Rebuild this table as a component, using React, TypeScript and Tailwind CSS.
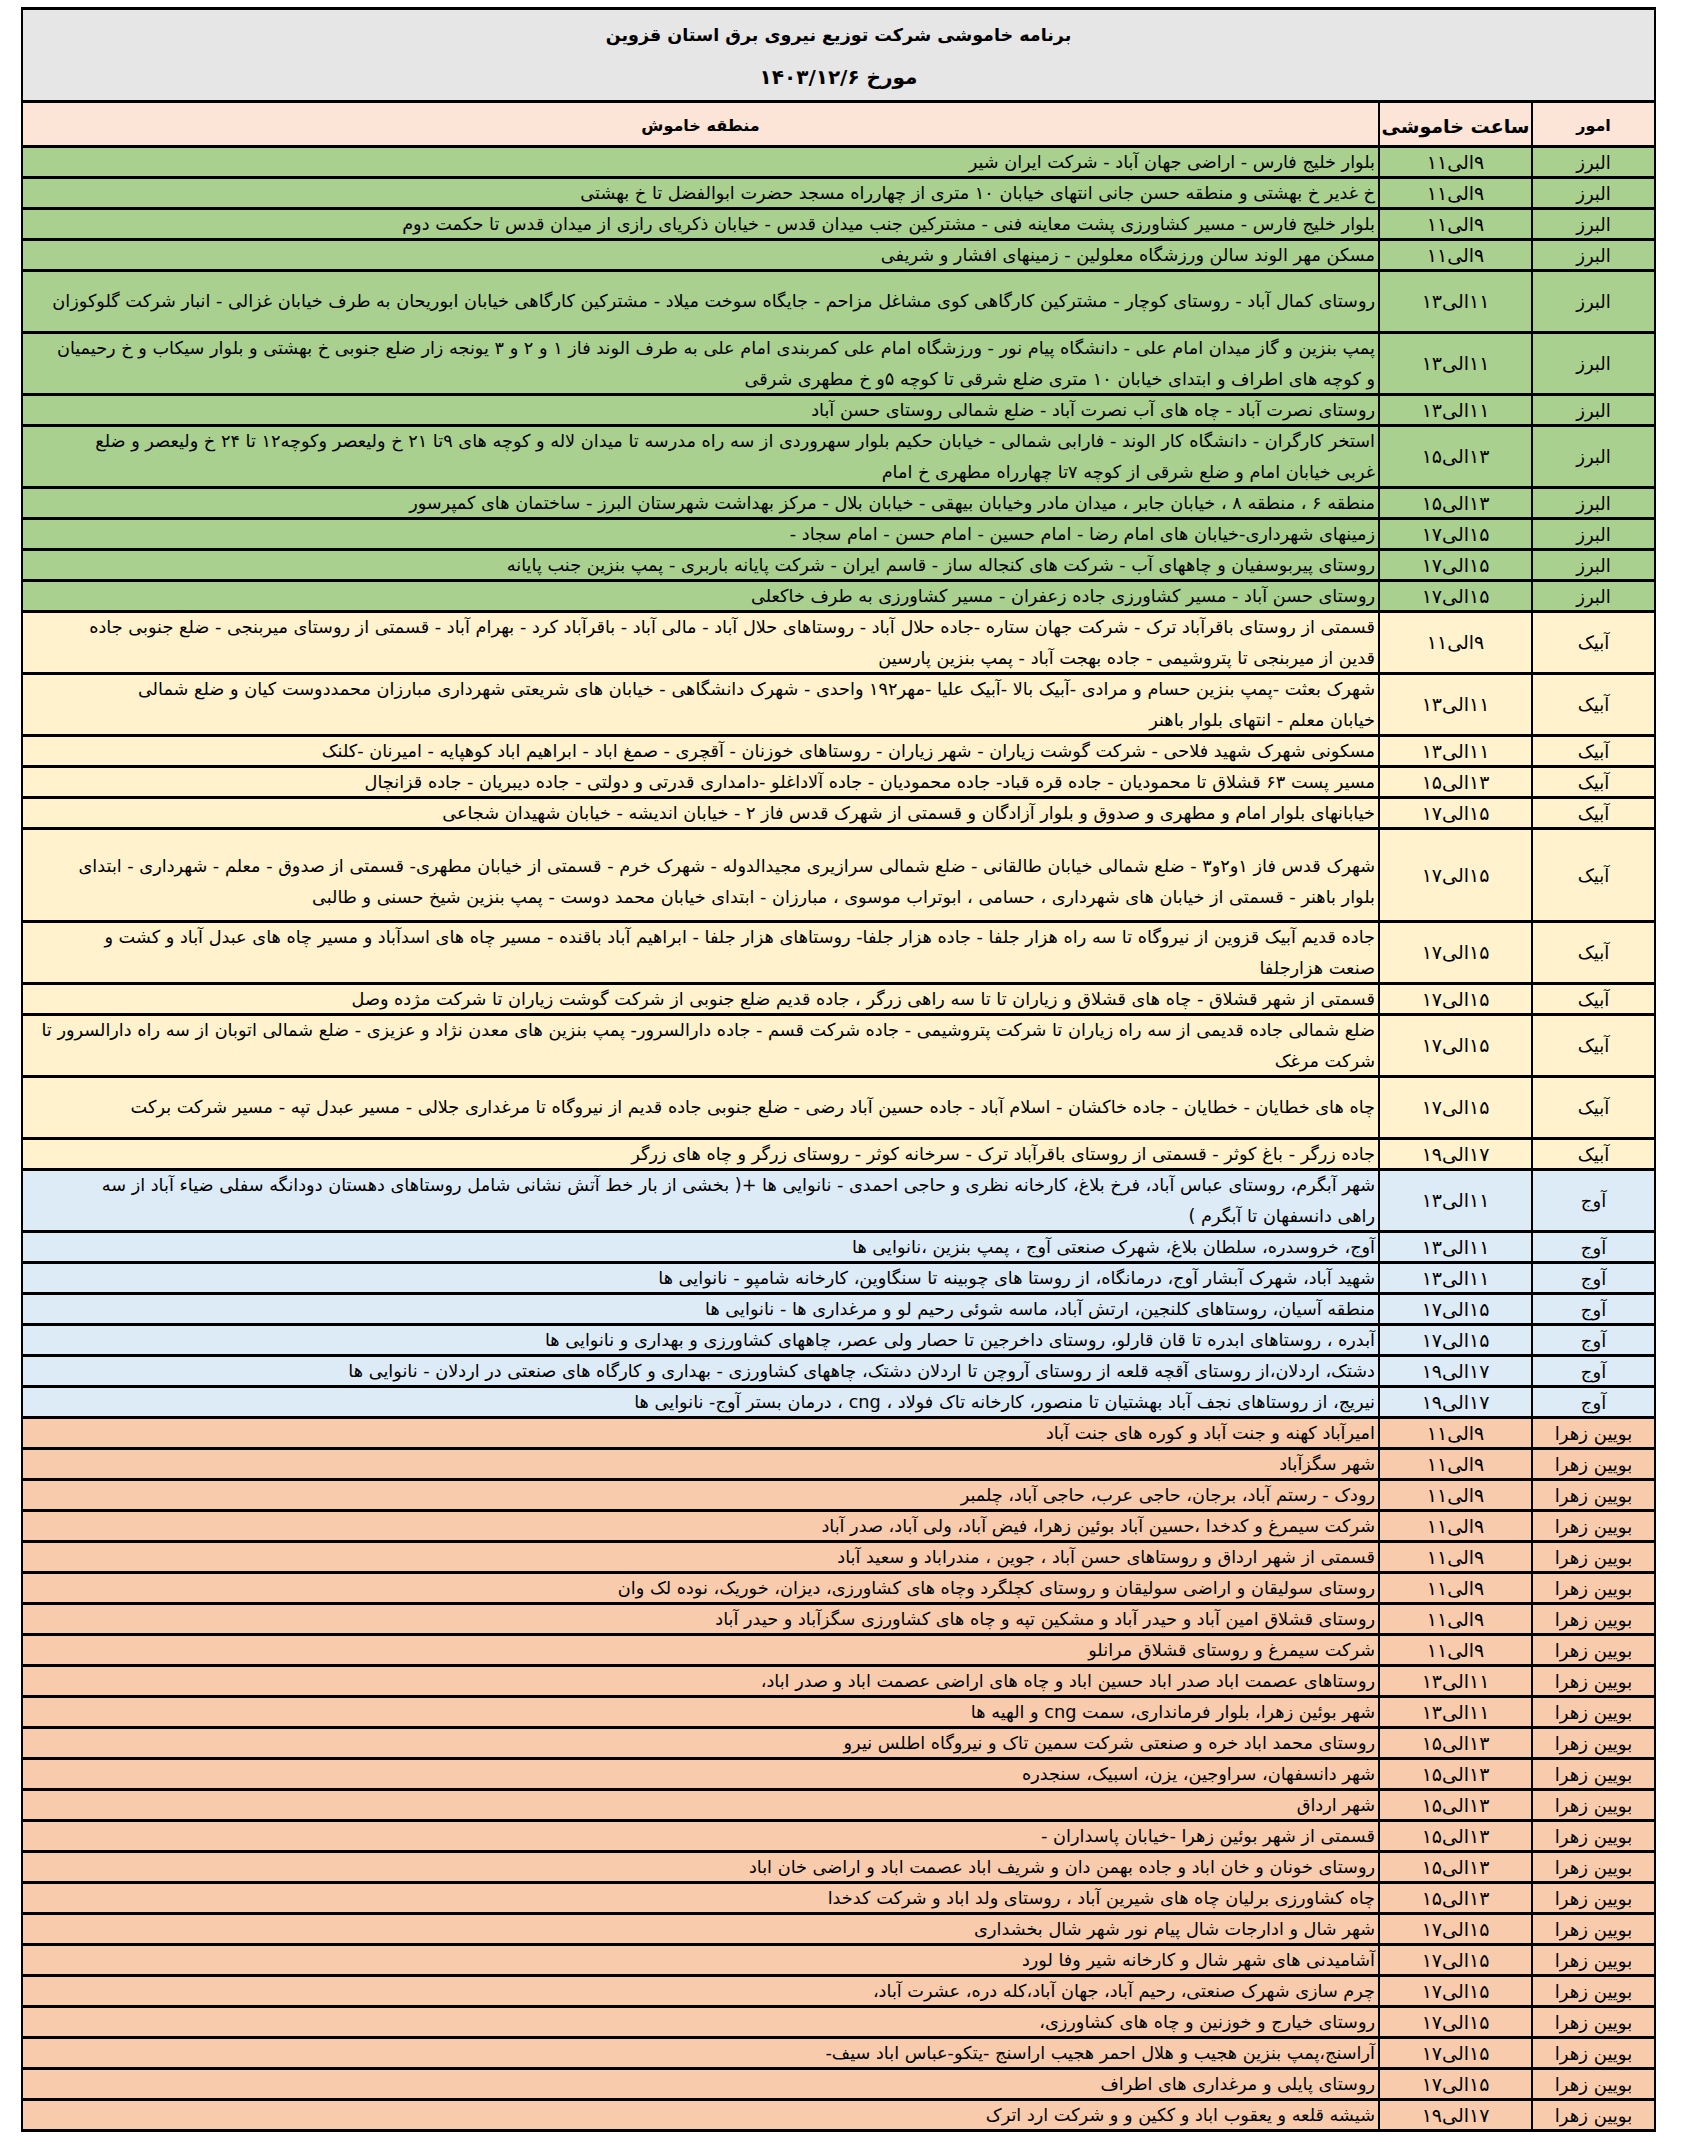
import React from "react";

type Row = {
  umur: string;
  from: string;
  to: string;
  lines: string[];
  units?: 1 | 2 | 3;
};

const BG: Record<string, string> = {
  "البرز": "bg-[#a9d08e]",
  "آبیک": "bg-[#fff2cc]",
  "آوج": "bg-[#ddebf7]",
  "بویین زهرا": "bg-[#f8cbad]",
};

const HEIGHT = { 1: "h-[31px]", 2: "h-[62px]", 3: "h-[93px]" };
// the one three-unit row sits its text a bit low
const PAD = { 1: "", 2: "", 3: "pt-[14px]" };

const A = "البرز";
const B = "آبیک";
const C = "آوج";
const D = "بویین زهرا";

const rows: Row[] = [
  { umur: A, from: "۹", to: "۱۱", lines: ["بلوار خلیج فارس - اراضی جهان آباد - شرکت ایران شیر"] },
  { umur: A, from: "۹", to: "۱۱", lines: ["خ غدیر خ بهشتی و منطقه حسن جانی انتهای خیابان ۱۰ متری از چهارراه مسجد حضرت ابوالفضل تا خ بهشتی"] },
  { umur: A, from: "۹", to: "۱۱", lines: ["بلوار خلیج فارس - مسیر کشاورزی پشت معاینه فنی - مشترکین جنب میدان قدس - خیابان ذکریای رازی از میدان قدس تا حکمت دوم"] },
  { umur: A, from: "۹", to: "۱۱", lines: ["مسکن مهر الوند سالن ورزشگاه معلولین - زمینهای افشار و شریفی"] },
  { umur: A, from: "۱۱", to: "۱۳", units: 2, lines: ["روستای کمال آباد - روستای کوچار - مشترکین کارگاهی کوی مشاغل مزاحم - جایگاه سوخت میلاد - مشترکین کارگاهی خیابان ابوریحان به طرف خیابان غزالی - انبار شرکت گلوکوزان"] },
  {
    umur: A, from: "۱۱", to: "۱۳", units: 2,
    lines: [
      "پمپ بنزین و گاز میدان امام علی - دانشگاه پیام نور - ورزشگاه امام علی کمربندی امام علی به طرف الوند فاز ۱ و ۲ و ۳ یونجه زار ضلع جنوبی خ بهشتی و بلوار سیکاب و خ رحیمیان",
      "و کوچه های اطراف و ابتدای خیابان ۱۰ متری ضلع شرقی تا کوچه ۵و خ مطهری شرقی",
    ],
  },
  { umur: A, from: "۱۱", to: "۱۳", lines: ["روستای نصرت آباد - چاه های آب نصرت آباد - ضلع شمالی روستای حسن آباد"] },
  {
    umur: A, from: "۱۳", to: "۱۵", units: 2,
    lines: [
      "استخر کارگران - دانشگاه کار الوند - فارابی شمالی - خیابان حکیم بلوار سهروردی از سه راه مدرسه تا میدان لاله و کوچه های ۹تا ۲۱ خ ولیعصر وکوچه۱۲ تا ۲۴ خ ولیعصر و ضلع",
      "غربی خیابان امام و ضلع شرقی از کوچه ۷تا چهارراه مطهری خ امام",
    ],
  },
  { umur: A, from: "۱۳", to: "۱۵", lines: ["منطقه ۶ ، منطقه ۸ ، خیابان جابر ، میدان مادر وخیابان بیهقی - خیابان بلال - مرکز بهداشت شهرستان البرز - ساختمان های کمپرسور"] },
  { umur: A, from: "۱۵", to: "۱۷", lines: ["زمینهای شهرداری-خیابان های امام رضا - امام حسین - امام حسن - امام سجاد -"] },
  { umur: A, from: "۱۵", to: "۱۷", lines: ["روستای پیربوسفیان و چاههای آب - شرکت های کنجاله ساز - قاسم ایران - شرکت پایانه باربری - پمپ بنزین جنب پایانه"] },
  { umur: A, from: "۱۵", to: "۱۷", lines: ["روستای حسن آباد - مسیر کشاورزی جاده زعفران - مسیر کشاورزی به طرف خاکعلی"] },
  {
    umur: B, from: "۹", to: "۱۱", units: 2,
    lines: [
      "قسمتی از روستای باقرآباد ترک - شرکت جهان ستاره -جاده حلال آباد - روستاهای حلال آباد - مالی آباد - باقرآباد کرد - بهرام آباد - قسمتی از روستای میربنجی - ضلع جنوبی جاده",
      "قدین از میربنجی تا پتروشیمی - جاده بهجت آباد - پمپ بنزین پارسین",
    ],
  },
  {
    umur: B, from: "۱۱", to: "۱۳", units: 2,
    lines: [
      "شهرک بعثت -پمپ بنزین حسام و مرادی -آبیک بالا -آبیک علیا -مهر۱۹۲ واحدی - شهرک دانشگاهی - خیابان های شریعتی شهرداری مبارزان محمددوست کیان و ضلع شمالی",
      "خیابان معلم - انتهای بلوار باهنر",
    ],
  },
  { umur: B, from: "۱۱", to: "۱۳", lines: ["مسکونی شهرک شهید فلاحی - شرکت گوشت زیاران - شهر زیاران - روستاهای خوزنان - آقچری - صمغ اباد - ابراهیم اباد کوهپایه - امیرنان -کلنک"] },
  { umur: B, from: "۱۳", to: "۱۵", lines: ["مسیر پست ۶۳ قشلاق تا محمودیان - جاده قره قباد- جاده محمودیان - جاده آلاداغلو -دامداری قدرتی و دولتی - جاده دیبریان - جاده قزانچال"] },
  { umur: B, from: "۱۵", to: "۱۷", lines: ["خیابانهای بلوار امام و مطهری و صدوق و بلوار آزادگان و قسمتی از شهرک قدس فاز ۲ - خیابان اندیشه - خیابان شهیدان شجاعی"] },
  {
    umur: B, from: "۱۵", to: "۱۷", units: 3,
    lines: [
      "شهرک قدس فاز ۱و۲و۳ - ضلع شمالی خیابان طالقانی - ضلع شمالی سرازیری مجیدالدوله - شهرک خرم - قسمتی از خیابان مطهری- قسمتی از صدوق - معلم - شهرداری - ابتدای",
      "بلوار باهنر - قسمتی از خیابان های شهرداری ، حسامی ، ابوتراب موسوی ، مبارزان - ابتدای خیابان محمد دوست - پمپ بنزین شیخ حسنی و طالبی",
    ],
  },
  {
    umur: B, from: "۱۵", to: "۱۷", units: 2,
    lines: [
      "جاده قدیم آبیک قزوین از نیروگاه تا سه راه هزار جلفا - جاده هزار جلفا- روستاهای هزار جلفا - ابراهیم آباد باقنده - مسیر چاه های اسدآباد و مسیر چاه های عبدل آباد و کشت و",
      "صنعت هزارجلفا",
    ],
  },
  { umur: B, from: "۱۵", to: "۱۷", lines: ["قسمتی از شهر قشلاق - چاه های قشلاق و زیاران تا تا سه راهی زرگر ، جاده قدیم ضلع جنوبی از شرکت گوشت زیاران تا شرکت مژده وصل"] },
  {
    umur: B, from: "۱۵", to: "۱۷", units: 2,
    lines: [
      "ضلع شمالی جاده قدیمی از سه راه زیاران تا شرکت پتروشیمی - جاده شرکت قسم - جاده دارالسرور- پمپ بنزین های معدن نژاد و عزیزی - ضلع شمالی اتوبان از سه راه دارالسرور تا",
      "شرکت مرغک",
    ],
  },
  { umur: B, from: "۱۵", to: "۱۷", units: 2, lines: ["چاه های خطایان - خطایان - جاده خاکشان - اسلام آباد - جاده حسین آباد رضی - ضلع جنوبی جاده قدیم از نیروگاه تا مرغداری جلالی - مسیر عبدل تپه - مسیر شرکت برکت"] },
  { umur: B, from: "۱۷", to: "۱۹", lines: ["جاده زرگر - باغ کوثر - قسمتی از روستای باقرآباد ترک - سرخانه کوثر - روستای زرگر و چاه های زرگر"] },
  {
    umur: C, from: "۱۱", to: "۱۳", units: 2,
    lines: [
      "شهر آبگرم، روستای عباس آباد، فرخ بلاغ، کارخانه نظری و حاجی احمدی - نانوایی ها +( بخشی از بار خط آتش نشانی شامل روستاهای دهستان دودانگه سفلی ضیاء آباد از سه",
      "راهی دانسفهان تا آبگرم )",
    ],
  },
  { umur: C, from: "۱۱", to: "۱۳", lines: ["آوج، خروسدره، سلطان بلاغ، شهرک صنعتی آوج ، پمپ بنزین ،نانوایی ها"] },
  { umur: C, from: "۱۱", to: "۱۳", lines: ["شهید آباد، شهرک آبشار آوج، درمانگاه، از روستا های چوبینه تا سنگاوین، کارخانه شامپو - نانوایی ها"] },
  { umur: C, from: "۱۵", to: "۱۷", lines: ["منطقه آسیان، روستاهای کلنجین، ارتش آباد، ماسه شوئی رحیم لو و مرغداری ها - نانوایی ها"] },
  { umur: C, from: "۱۵", to: "۱۷", lines: ["آبدره ، روستاهای ابدره تا قان قارلو، روستای داخرجین تا حصار ولی عصر، چاههای کشاورزی و بهداری و نانوایی ها"] },
  { umur: C, from: "۱۷", to: "۱۹", lines: ["دشتک، اردلان،از روستای آقچه قلعه از روستای آروچن تا اردلان دشتک، چاههای کشاورزی - بهداری و کارگاه های صنعتی در اردلان - نانوایی ها"] },
  { umur: C, from: "۱۷", to: "۱۹", lines: ["نیریج، از روستاهای نجف آباد بهشتیان تا منصور، کارخانه تاک فولاد ، cng ، درمان بستر آوج- نانوایی ها"] },
  { umur: D, from: "۹", to: "۱۱", lines: ["امیرآباد کهنه و جنت آباد و کوره های جنت آباد"] },
  { umur: D, from: "۹", to: "۱۱", lines: ["شهر سگزآباد"] },
  { umur: D, from: "۹", to: "۱۱", lines: ["رودک - رستم آباد، برجان، حاجی عرب، حاجی آباد، چلمبر"] },
  { umur: D, from: "۹", to: "۱۱", lines: ["شرکت سیمرغ و کدخدا ،حسین آباد بوئین زهرا، فیض آباد، ولی آباد، صدر آباد"] },
  { umur: D, from: "۹", to: "۱۱", lines: ["قسمتی از شهر ارداق و روستاهای حسن آباد ، جوین ، مندراباد و سعید آباد"] },
  { umur: D, from: "۹", to: "۱۱", lines: ["روستای سولیقان و اراضی سولیقان و روستای کچلگرد وچاه های کشاورزی، دیزان، خوریک، نوده لک وان"] },
  { umur: D, from: "۹", to: "۱۱", lines: ["روستای قشلاق امین آباد و حیدر آباد و مشکین تپه و چاه های کشاورزی سگزآباد و حیدر آباد"] },
  { umur: D, from: "۹", to: "۱۱", lines: ["شرکت سیمرغ و روستای قشلاق مرانلو"] },
  { umur: D, from: "۱۱", to: "۱۳", lines: ["روستاهای عصمت اباد صدر اباد حسین اباد و چاه های اراضی عصمت اباد و صدر اباد،"] },
  { umur: D, from: "۱۱", to: "۱۳", lines: ["شهر بوئین زهرا، بلوار فرمانداری، سمت cng و الهیه ها"] },
  { umur: D, from: "۱۳", to: "۱۵", lines: ["روستای محمد اباد خره و صنعتی شرکت سمین تاک و نیروگاه اطلس نیرو"] },
  { umur: D, from: "۱۳", to: "۱۵", lines: ["شهر دانسفهان، سراوجین، یزن، اسبیک، سنجدره"] },
  { umur: D, from: "۱۳", to: "۱۵", lines: ["شهر ارداق"] },
  { umur: D, from: "۱۳", to: "۱۵", lines: ["قسمتی از شهر بوئین زهرا -خیابان پاسداران -"] },
  { umur: D, from: "۱۳", to: "۱۵", lines: ["روستای خونان و خان اباد و جاده بهمن دان و شریف اباد عصمت اباد و اراضی خان اباد"] },
  { umur: D, from: "۱۳", to: "۱۵", lines: ["چاه کشاورزی برلیان چاه های شیرین آباد ، روستای ولد اباد و شرکت کدخدا"] },
  { umur: D, from: "۱۵", to: "۱۷", lines: ["شهر شال و ادارجات شال پیام نور شهر شال بخشداری"] },
  { umur: D, from: "۱۵", to: "۱۷", lines: ["آشامیدنی های شهر شال و کارخانه شیر وفا لورد"] },
  { umur: D, from: "۱۵", to: "۱۷", lines: ["چرم سازی شهرک صنعتی، رحیم آباد، جهان آباد،کله دره، عشرت آباد،"] },
  { umur: D, from: "۱۵", to: "۱۷", lines: ["روستای خیارج و خوزنین و چاه های کشاورزی،"] },
  { umur: D, from: "۱۵", to: "۱۷", lines: ["آراسنج،پمپ بنزین هجیب و هلال احمر هجیب اراسنج -یتکو-عباس اباد سیف-"] },
  { umur: D, from: "۱۵", to: "۱۷", lines: ["روستای پایلی و مرغداری های اطراف"] },
  { umur: D, from: "۱۷", to: "۱۹", lines: ["شیشه قلعه و یعقوب اباد و ککین و و شرکت ارد اترک"] },
];

function TableRow({ r }: { r: Row }) {
  const u = r.units ?? 1;
  return (
    <div className={`flex border-t-[3px] border-black ${HEIGHT[u]} ${BG[r.umur]}`}>
      <div className="w-[123px] shrink-0 border-l-2 border-black flex items-center justify-center text-[18px] whitespace-nowrap">
        {r.umur}
      </div>
      <div className="w-[153px] shrink-0 border-l-2 border-black flex items-center justify-center text-[19px] whitespace-nowrap">
        {r.from}الی{r.to}
      </div>
      <div className={`flex-1 min-w-0 flex flex-col justify-center items-start pr-[3px] overflow-hidden ${PAD[u]}`}>
        {r.lines.map((l, i) => (
          <div key={i} className="whitespace-nowrap leading-[31px]">
            {l}
          </div>
        ))}
      </div>
    </div>
  );
}

export default function App() {
  return (
    <div className="min-h-[2140px] bg-white pt-[7px] pl-[21px] font-['DejaVu_Sans',sans-serif] text-black">
      <div dir="rtl" className="w-[1635px] border-x-2 border-b-[3px] border-black text-[17.7px]">
        {/* title */}
        <div className="h-[93px] border-t-[3px] border-black bg-[#e7e6e6] flex flex-col items-center font-bold">
          <div className="mt-[10px] leading-[30px] text-[17.5px]">برنامه خاموشی شرکت توزیع نیروی برق استان قزوین</div>
          <div className="mt-[12px] leading-[30px] text-[20px]">مورخ ۱۴۰۳/۱۲/۶</div>
        </div>

        {/* header */}
        <div className="flex h-[45px] border-t-[3px] border-black bg-[#fce4d6] font-bold whitespace-nowrap">
          <div className="w-[123px] shrink-0 border-l-2 border-black flex items-center justify-center pt-[4px] text-[16px]">امور</div>
          <div className="w-[153px] shrink-0 border-l-2 border-black flex items-center justify-center pt-[4px] text-[19px]">ساعت خاموشی</div>
          <div className="flex-1 flex items-center justify-center pt-[4px] text-[16px]">منطقه خاموش</div>
        </div>

        {rows.map((r, i) => (
          <TableRow key={i} r={r} />
        ))}
      </div>
    </div>
  );
}
